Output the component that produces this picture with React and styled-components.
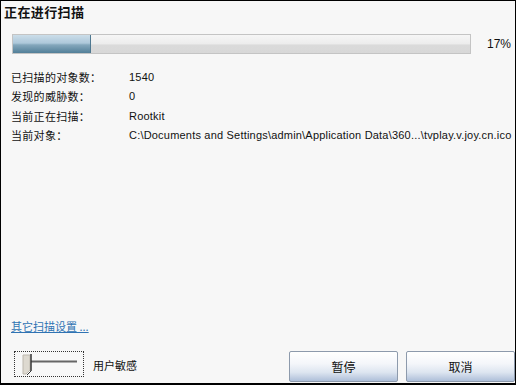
import React from "react";
import styled, { createGlobalStyle } from "styled-components";

const Global = createGlobalStyle`
  html, body { margin: 0; padding: 0; background: #f7f7f7; }
  * { box-sizing: border-box; }
`;

const Window = styled.div`
  width: 516px;
  height: 385px;
  border: 1px solid #000;
  border-bottom-width: 2px;
  background: #f7f7f7;
  display: flex;
  flex-direction: column;
  font-family: "Noto Sans CJK SC", "Liberation Sans", sans-serif;
  color: #111;
  overflow: hidden;
`;

const Title = styled.div`
  font-size: 13px;
  font-weight: bold;
  line-height: 16px;
  padding: 3px 0 0 3px;
  letter-spacing: 0.4px;
`;

const ProgressRow = styled.div`
  display: flex;
  align-items: center;
  margin-top: 14px;
  padding-left: 11px;
`;

const Track = styled.div`
  width: 459px;
  height: 20px;
  border: 1px solid #c4c4c4;
  background: linear-gradient(#f6f6f6 0%, #ececec 50%, #dadada 55%, #d8d8d8 100%);
`;

const Fill = styled.div`
  height: 100%;
  border-right: 1px solid #4f7890;
  background: linear-gradient(#cbdde9 0%, #adc8da 45%, #84a7bc 55%, #527f98 100%);
`;

const Percent = styled.span`
  margin-left: 16px;
  font-family: "Liberation Sans", sans-serif;
  font-size: 12px;
`;

const Info = styled.div`
  display: grid;
  grid-template-columns: 118px 1fr;
  grid-auto-rows: 19.5px;
  margin-top: 13px;
  padding-left: 10px;
  align-items: center;
`;

const Label = styled.span`
  font-family: "Noto Sans CJK SC", sans-serif;
  font-size: 11px;
  letter-spacing: 0.3px;
`;

const Value = styled.span`
  font-family: "Liberation Sans", "Noto Sans CJK SC", sans-serif;
  font-size: 11px;
  letter-spacing: 0.2px;
  white-space: nowrap;
`;

const Spacer = styled.div`
  flex: 1;
`;

const Link = styled.a`
  margin-left: 10px;
  font-size: 11px;
  color: #2f73b3;
  text-decoration: underline;
  cursor: pointer;
  line-height: 14px;
`;

const Bottom = styled.div`
  display: flex;
  align-items: flex-start;
  margin-top: 18px;
  height: 32px;
`;

const SliderBox = styled.div`
  margin-left: 13px;
  width: 70px;
  height: 26px;
  border: 1px dotted #333;
  position: relative;
`;

const SliderLabel = styled.span`
  margin-left: 9px;
  margin-top: 6px;
  font-size: 11px;
`;

const Button = styled.button`
  width: 109px;
  height: 31px;
  margin-left: ${(p) => p.$gap}px;
  border: 1px solid #8d9aac;
  border-radius: 2px;
  background: linear-gradient(#ffffff 0%, #f4f6fa 40%, #dde5f0 70%, #aebfd9 100%);
  font-family: "Noto Sans CJK SC", sans-serif;
  font-size: 12px;
  color: #111;
  padding: 0;
`;

const Thumb = () => (
  <svg width="66" height="22" style={{ position: "absolute", left: 2, top: 1 }}>
    <line x1="14" y1="8.5" x2="60" y2="8.5" stroke="#666" strokeWidth="2" />
    <path d="M6 2 H13 V17 L9 21 H6 Z" fill="#ddd9d0" stroke="#bdb8ae" strokeWidth="1" />
    <line x1="14" y1="1" x2="14" y2="18" stroke="#333" strokeWidth="1.5" />
    <line x1="14" y1="18" x2="10" y2="22" stroke="#333" strokeWidth="1" />
  </svg>
);

const rows = [
  ["已扫描的对象数：", "1540"],
  ["发现的威胁数：", "0"],
  ["当前正在扫描：", "Rootkit"],
  ["当前对象：", "C:\\Documents and Settings\\admin\\Application Data\\360...\\tvplay.v.joy.cn.ico"],
];

export default function App() {
  const pct = 17;
  return (
    <>
      <Global />
      <Window>
        <Title>正在进行扫描</Title>
        <ProgressRow>
          <Track>
            <Fill style={{ width: `${pct}%` }} />
          </Track>
          <Percent>{pct}%</Percent>
        </ProgressRow>
        <Info>
          {rows.map(([l, v]) => (
            <React.Fragment key={l}>
              <Label>{l}</Label>
              <Value>{v}</Value>
            </React.Fragment>
          ))}
        </Info>
        <Spacer />
        <Link>其它扫描设置 ...</Link>
        <Bottom>
          <SliderBox>
            <Thumb />
          </SliderBox>
          <SliderLabel>用户敏感</SliderLabel>
          <Spacer />
          <Button $gap={0}>暂停</Button>
          <Button $gap={8}>取消</Button>
        </Bottom>
      </Window>
    </>
  );
}
